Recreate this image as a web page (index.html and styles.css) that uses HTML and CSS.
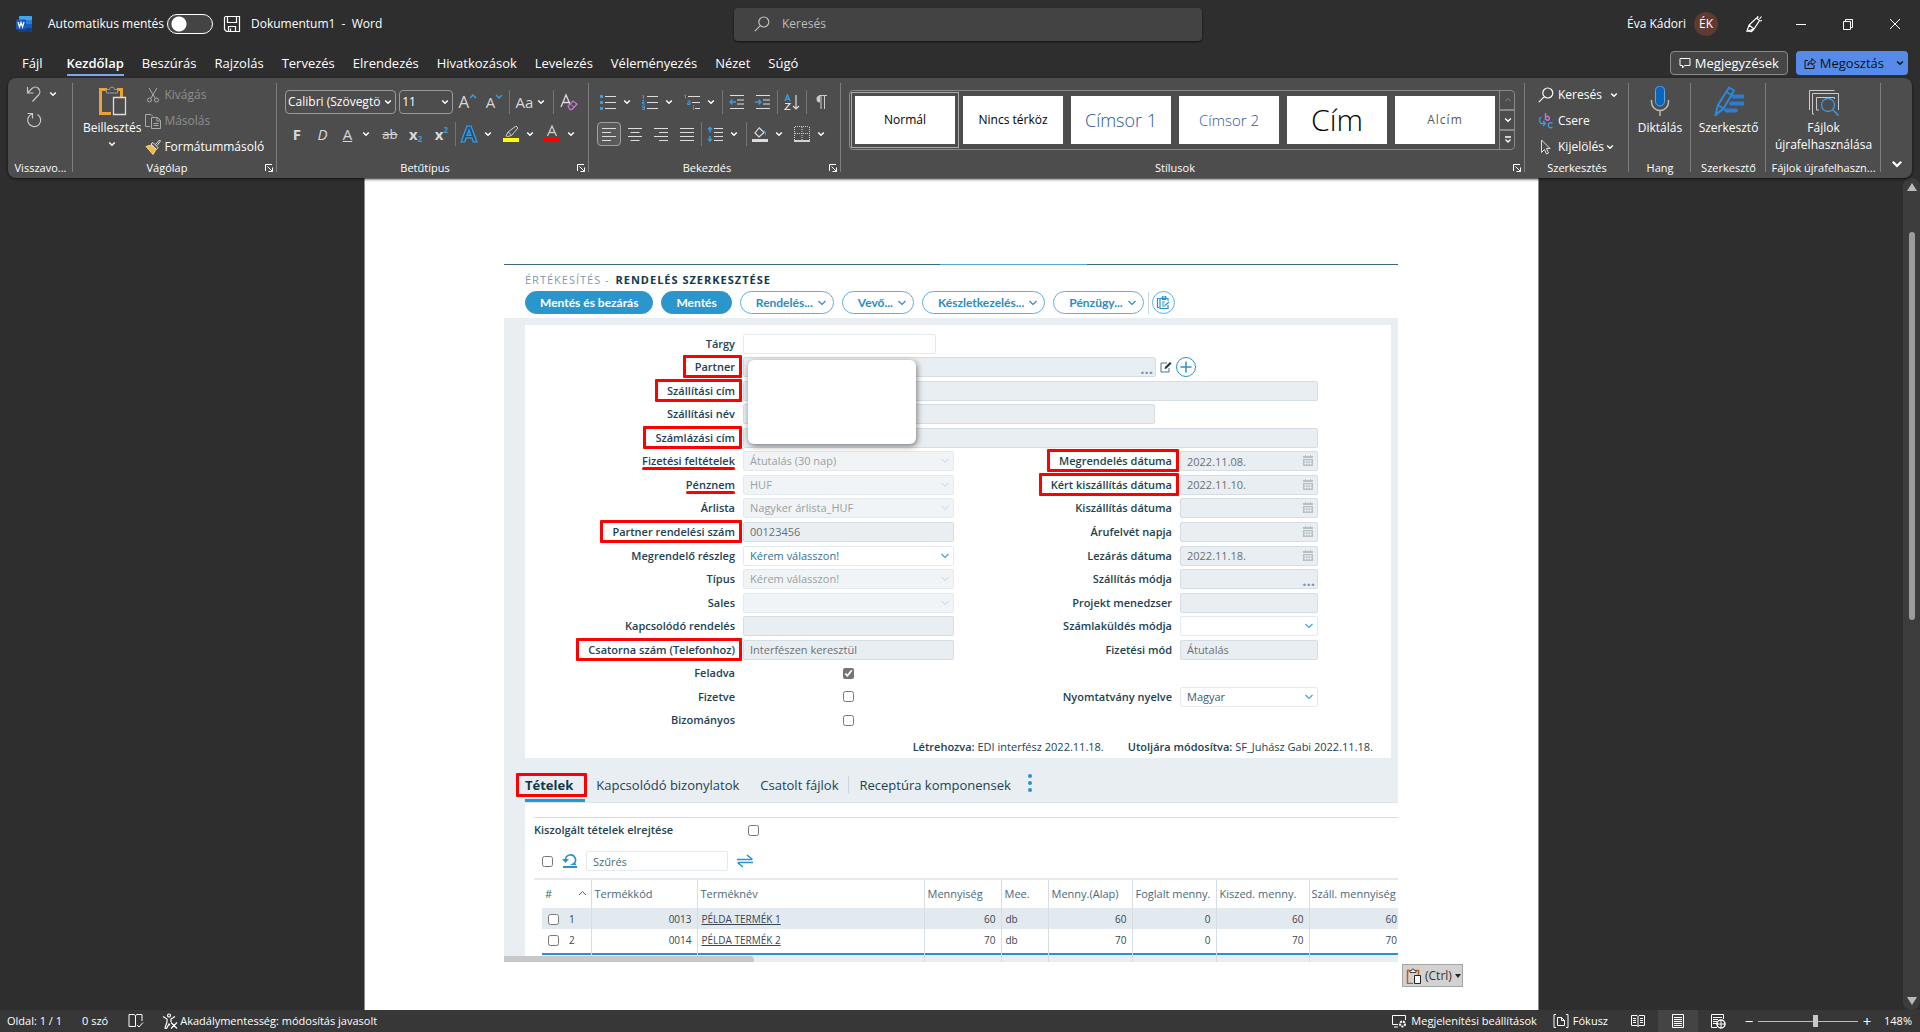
FILE: index.html
```html
<!DOCTYPE html>
<html lang="hu">
<head>
<meta charset="utf-8">
<title>Dokumentum1 - Word</title>
<link rel="stylesheet" href="styles.css">
</head>
<body>
<svg class="sprite" aria-hidden="true">
  <symbol id="chev" viewBox="0 0 8 8"><path d="M1.2 2.5 4 5.3l2.8-2.8" fill="none" stroke="currentColor" stroke-width="1.5"/></symbol>
  <symbol id="launch" viewBox="0 0 8 8"><path d="M.5 7V.5H7M2.5 2.5l5 5M7.500 3.500v4h-4" fill="none" stroke="currentColor"/></symbol>
  <symbol id="lens" viewBox="0 0 16 16"><path d="M6.300 9.700.8 15.200M9.800 11a5 5 0 1 0 0-10 5 5 0 0 0 0 10z" fill="none" stroke="currentColor" stroke-width="1.200"/></symbol>
  <symbol id="cal" viewBox="0 0 12 12"><path d="M1 1h2V0h1v1h4V0h1v1h2v2H1zM1 4h10v7H1z" fill="#b9c0c4"/><path d="M2 6h8M2 8.500h8M3.500 5v5M6 5v5M8.500 5v5" stroke="#e9eef2" stroke-width=".8"/></symbol>
  <symbol id="down" viewBox="0 0 10 8"><path d="M1.500 2 5 5.500 8.500 2" fill="none" stroke="currentColor" stroke-width="1.200"/></symbol>
</svg>

<header class="titlebar">
  <div class="title-left">
    <svg class="logo" viewBox="0 0 16 16"><rect x="3" width="13" height="16" rx="1" fill="#2b7cd3"/><rect x="3" width="13" height="4" rx="1" fill="#41a5ee"/><rect x="3" y="8" width="13" height="4" fill="#185abd"/><path d="M3 12h13v3a1 1 0 0 1-1 1H4a1 1 0 0 1-1-1z" fill="#103f91"/><rect y="3.500" width="10" height="10" rx="1" fill="#185abd"/><path d="m2 6 1.500 5L5 6.500 6.500 11 8 6" fill="none" stroke="#fff" stroke-width="1.200"/></svg>
    <label class="autosave">Automatikus mentés<input type="checkbox" class="switch"></label>
    <button class="plain" aria-label="Mentés"><svg class="i18" viewBox="0 0 18 18"><path d="M1.500 3A1.500 1.500 0 0 1 3 1.500h13.500v15H3.500l-2-2zM4.500 1.500v6h9v-6M5.500 16.500v-5h7v5M7.500 13.500v3" fill="none" stroke="#fff" stroke-width="1.200"/></svg></button>
    <span>Dokumentum1 &nbsp;-&nbsp; Word</span>
  </div>
  <label class="search"><svg class="i16" ><use href="#lens"/></svg><input type="text" placeholder="Keresés" aria-label="Keresés"></label>
  <div class="title-right">
    <span class="user">Éva Kádori</span>
    <span class="avatar">ÉK</span>
    <button class="plain win" aria-label="Rajz"><svg class="i18" viewBox="0 0 18 18"><path d="M2 16 4 10 11.500 3l3 2.500L9 14zM4 10l5 4M2 16l4.500.5L9 14M12.500 3l.5-2M14.500 4l2-2.500M15 6l2-.5" fill="none" stroke="#fff" stroke-width="1.200"/></svg></button>
    <button class="plain win" aria-label="Kis méret"><svg class="i12" viewBox="0 0 12 12"><path d="M1 6.500h10" stroke="#fff"/></svg></button>
    <button class="plain win" aria-label="Előző méret"><svg class="i12" viewBox="0 0 12 12"><path d="M1.500 3.500h7v8h-7zM3.500 3.500v-2h7v8h-2" fill="none" stroke="#fff"/></svg></button>
    <button class="plain win" aria-label="Bezárás"><svg class="i12" viewBox="0 0 12 12"><path d="m1 1 10 10M11 1 1 11" stroke="#fff"/></svg></button>
  </div>
</header>

<nav class="tabs">
  <a href="#" class="file">Fájl</a><a href="#" class="active">Kezdőlap</a><a href="#">Beszúrás</a><a href="#">Rajzolás</a><a href="#">Tervezés</a><a href="#">Elrendezés</a><a href="#">Hivatkozások</a><a href="#">Levelezés</a><a href="#">Véleményezés</a><a href="#">Nézet</a><a href="#">Súgó</a>
  <span class="grow"></span>
  <button class="comments"><svg class="i12" viewBox="0 0 12 12"><path d="M1 1.500h10v7H5.500L3.500 11V8.500H1z" fill="none" stroke="#fff"/></svg>Megjegyzések</button>
  <button class="share"><svg class="i12" viewBox="0 0 12 12"><path d="M4 3.500H1v8h9V8M4 8.500C4 5 6 4 8 4V1.500L11.500 5 8 8V6C6.500 6 5 6.500 4 8.500z" fill="none" stroke="#111"/></svg>Megosztás<svg class="chev"><use href="#chev"/></svg></button>
</nav>

<section class="ribbon">
  <div class="group g-undo">
    <div class="stack">
      <button class="tool split"><svg class="i16" viewBox="0 0 16 16"><path d="M1.500 1v6h6M2 6.500l4-4a4.500 4.500 0 0 1 6.500 6.500l-6 6.500" fill="none" stroke="#c8c8c8" stroke-width="1.200"/></svg><svg class="chev"><use href="#chev"/></svg></button>
      <button class="tool split"><svg class="i16" viewBox="0 0 16 16"><path d="M1.500 1.500h5v5M6 2A6.500 6.500 0 1 0 11.500 2.500" fill="none" stroke="#c8c8c8" stroke-width="1.200"/></svg></button>
    </div>
    <div class="caption">Visszavo...</div>
  </div>
  <div class="group g-clip">
    <div class="clip">
      <button class="big"><svg class="i30" viewBox="0 0 30 30"><path d="M10 3.500H3.500v24H14M20 3.500h4.500V11" fill="none" stroke="#e8a33d" stroke-width="3"/><path d="M9.500 7V3.500h3a2.500 2.500 0 0 1 5 0h3V7z" fill="#4d4d4d" stroke="#9a9a9a"/><path d="M16.500 11.500h12v17h-12z" fill="#4d4d4d" stroke="#ddd" stroke-width="1.300"/></svg>Beillesztés<svg class="chev"><use href="#chev"/></svg></button>
      <div class="mini">
        <button disabled><svg class="i16" viewBox="0 0 16 16"><path d="m4 1 6 10M12 1 6 11M4.500 15a2 2 0 1 0 0-4 2 2 0 0 0 0 4zM11.500 15a2 2 0 1 0 0-4 2 2 0 0 0 0 4z" fill="none" stroke="#aaa"/></svg>Kivágás</button>
        <button disabled><svg class="i16" viewBox="0 0 16 16"><path d="M5 13.500H.5v-12H6l2 2M6.500 4.500h6l3 3v8h-9zM12 4.500v3.500h3.500M8.500 10.500h5M8.500 12.500h5" fill="none" stroke="#aaa"/></svg>Másolás</button>
        <button><svg class="i16" viewBox="0 0 16 16"><path d="M1 7.500 6.500 6 11 10.500 8 15.500z" fill="#f0b64f" stroke="#ffd98a"/><path d="m6 5 2-1.500 5 5-1.500 2z" fill="#555" stroke="#ddd"/><path d="m10.500 5.500 4-4.500 1 1-3.500 4.500" fill="none" stroke="#ddd"/></svg>Formátummásoló</button>
      </div>
    </div>
    <div class="caption tail">Vágólap<svg class="launch"><use href="#launch"/></svg></div>
  </div>
  <div class="group g-font">
    <div class="rows">
      <div class="row wide">
        <label class="combo fontname"><input type="text" value="Calibri (Szövegtörzs)" aria-label="Betűtípus"><svg class="chev"><use href="#chev"/></svg></label>
        <label class="combo fontsize"><input type="text" value="11" aria-label="Betűméret"><svg class="chev"><use href="#chev"/></svg></label>
        <button class="tool big-a">A<svg class="chev blue"><path d="m1 5 3-3 3 3" fill="none" stroke="currentColor" stroke-width="1.500"/></svg></button>
        <button class="tool small-a">A<svg class="chev blue"><path d="m1 2 3 3 3-3" fill="none" stroke="currentColor" stroke-width="1.500"/></svg></button>
        <i class="sep"></i>
        <button class="tool split aa">Aa<svg class="chev"><use href="#chev"/></svg></button>
        <i class="sep"></i>
        <button class="tool"><svg class="i18" viewBox="0 0 18 18"><path d="M1 14 6 2l4 9M3 9.500h6" fill="none" stroke="#ddd" stroke-width="1.300"/><path d="m8 13 5-5 4 3-5 5.500H10z" fill="#4d4d4d" stroke="#c875d6" stroke-width="1.300"/><path d="m10 11 4 3" stroke="#c875d6"/></svg></button>
      </div>
      <div class="row">
        <button class="tool"><b>F</b></button>
        <button class="tool"><em>D</em></button>
        <button class="tool split"><u>A</u><svg class="chev"><use href="#chev"/></svg></button>
        <button class="tool"><s>ab</s></button>
        <button class="tool"><b>x</b><sub>2</sub></button>
        <button class="tool"><b>x</b><sup>2</sup></button>
        <i class="sep"></i>
        <button class="tool split"><svg class="i18" viewBox="0 0 16 16"><path fill-rule="evenodd" d="M1 15 6.200 1h3.600L15 15h-3.200l-1.200-3.500H5.400L4.200 15zM8 4.500 6.300 9.200h3.400z" fill="#1f4e79" stroke="#3a9be0" stroke-width="1.200"/></svg><svg class="chev"><use href="#chev"/></svg></button>
        <button class="tool split"><svg class="i18" viewBox="0 0 18 18"><path d="m4 11 2-4 8-6 2 2-6.500 7.500-4 1zM6 7l3.500 3" fill="none" stroke="#ccc"/><path d="M1 13h16v4H1z" fill="#ff0"/></svg><svg class="chev"><use href="#chev"/></svg></button>
        <button class="tool split"><svg class="i18" viewBox="0 0 18 18"><path d="M4.500 11 9 1l4.500 10M6 7.500h6" fill="none" stroke="#ccc" stroke-width="1.300"/><path d="M1 13h16v4H1z" fill="#f00"/></svg><svg class="chev"><use href="#chev"/></svg></button>
      </div>
    </div>
    <div class="caption tail">Betűtípus<svg class="launch"><use href="#launch"/></svg></div>
  </div>
  <div class="group g-para">
    <div class="rows">
      <div class="row">
        <button class="tool split"><svg class="i16" viewBox="0 0 16 16"><path d="M5 2.500h11M5 8.500h11M5 14.500h11" stroke="#ddd"/><path d="M0 1h3v3H0zM0 7h3v3H0zM0 13h3v3H0z" fill="#3a9be0"/></svg><svg class="chev"><use href="#chev"/></svg></button>
        <button class="tool split"><svg class="i16" viewBox="0 0 16 16"><path d="M5 2.500h11M5 8.500h11M5 14.500h11" stroke="#ddd"/><path d="M.5 1.500h1V5M0 6.500h2v2H.5v1.500H3M0 12h2.500v3.500H0M0 13.700h2.500" fill="none" stroke="#3a9be0"/></svg><svg class="chev"><use href="#chev"/></svg></button>
        <button class="tool split"><svg class="i16" viewBox="0 0 16 16"><path d="M4 2.500h12M8 8.500h8M11 14.500h5" stroke="#ddd"/><path d="M.5 1h1v3.500M3.500 7H6v3.500H3.500V9H6M9.500 12.500V16M9.500 11v1" fill="none" stroke="#3a9be0"/></svg><svg class="chev"><use href="#chev"/></svg></button>
        <i class="sep"></i>
        <button class="tool"><svg class="i16" viewBox="0 0 16 16"><path d="M1 1.500h14M8 6h7M8 10h7M1 14.500h14" stroke="#ddd"/><path d="M7 8H1M3.500 5.500 1 8l2.500 2.500" fill="none" stroke="#3a9be0" stroke-width="1.300"/></svg></button>
        <button class="tool"><svg class="i16" viewBox="0 0 16 16"><path d="M1 1.500h14M8 6h7M8 10h7M1 14.500h14" stroke="#ddd"/><path d="M0 8h6M3.500 5.500 6 8l-2.500 2.500" fill="none" stroke="#3a9be0" stroke-width="1.300"/></svg></button>
        <i class="sep"></i>
        <button class="tool"><svg class="i16" viewBox="0 0 16 16"><path d="M1 7 3.500.8 6 7M2 5h3" fill="none" stroke="#3a9be0" stroke-width="1.400"/><path d="M1 9.500h5L1 15.500h5.500M12 1v14M9 12l3 3 3-3" fill="none" stroke="#ddd" stroke-width="1.200"/></svg></button>
        <i class="sep"></i>
        <button class="tool"><svg class="i16" viewBox="0 0 16 16"><path d="M7 8.500A3.500 3.500 0 0 1 7 1.500z" fill="#ccc"/><path d="M6 1.500h8M8 2v13M11.500 2v13" stroke="#ccc" fill="none"/></svg></button>
      </div>
      <div class="row">
        <button class="tool on"><svg class="i16" viewBox="0 0 16 16"><path d="M1 2.500h14M1 6.500h9M1 10.500h14M1 14.500h9" stroke="#ddd"/></svg></button>
        <button class="tool"><svg class="i16" viewBox="0 0 16 16"><path d="M1 2.500h14M3.500 6.500h9M1 10.500h14M3.500 14.500h9" stroke="#ddd"/></svg></button>
        <button class="tool"><svg class="i16" viewBox="0 0 16 16"><path d="M1 2.500h14M6 6.500h9M1 10.500h14M6 14.500h9" stroke="#ddd"/></svg></button>
        <button class="tool"><svg class="i16" viewBox="0 0 16 16"><path d="M1 2.500h14M1 6.500h14M1 10.500h14M1 14.500h14" stroke="#ddd"/></svg></button>
        <i class="sep"></i>
        <button class="tool split"><svg class="i16" viewBox="0 0 16 16"><path d="M7 2.500h9M7 6.500h9M7 10.500h9M7 14.500h9" stroke="#ddd"/><path d="M3 1.500v5M3 10v5M1 3.500l2-2 2 2M1 13l2 2 2-2" fill="none" stroke="#3a9be0" stroke-width="1.500"/></svg><svg class="chev"><use href="#chev"/></svg></button>
        <i class="sep"></i>
        <button class="tool split"><svg class="i16" viewBox="0 0 16 16"><path d="m7 1.500 5 5-5 4.500-4-4L7 2" fill="none" stroke="#ddd" stroke-width="1.200"/><path d="M12 4q2.500 1 2 6l-1.500-3z" fill="#3a9be0"/><path d="M0 13h16v3H0z" fill="#ddd"/></svg><svg class="chev"><use href="#chev"/></svg></button>
        <button class="tool split"><svg class="i16" viewBox="0 0 16 16"><path d="M.5 1v13M15.500 1v13M8 1v13M1 .5h14M1 7.500h14" stroke="#ccc" stroke-dasharray="1 1"/><path d="M0 15h16" stroke="#fff" stroke-width="1.500"/></svg><svg class="chev"><use href="#chev"/></svg></button>
      </div>
    </div>
    <div class="caption tail">Bekezdés<svg class="launch"><use href="#launch"/></svg></div>
  </div>
  <div class="group g-styles">
    <div class="gallery">
      <button class="tile selected">Normál</button><button class="tile">Nincs térköz</button><button class="tile h1">Címsor 1</button><button class="tile h2">Címsor 2</button><button class="tile big-title">Cím</button><button class="tile subtitle">Alcím</button>
      <div class="gal-nav"><button class="dim" aria-label="Fel"><svg class="chev"><path d="m1.500 5 2.500-2.500L6.500 5" fill="none" stroke="currentColor"/></svg></button><button aria-label="Le"><svg class="chev"><use href="#chev"/></svg></button><button aria-label="Egyebek"><svg class="chev"><path d="M1 1h6M1.500 3.500 4 6l2.500-2.500" fill="none" stroke="currentColor" stroke-width="1.300"/></svg></button></div>
    </div>
    <div class="caption tail">Stílusok<svg class="launch"><use href="#launch"/></svg></div>
  </div>
  <div class="group g-edit">
    <div class="mini">
      <button><svg class="i16"><use href="#lens"/></svg>Keresés<svg class="chev far"><use href="#chev"/></svg></button>
      <button><svg class="i16" viewBox="0 0 16 16"><path d="M7.500 0v7M7.500 4.500a2 2 0 1 1 0 1.500" fill="none" stroke="#c875d6" stroke-width="1.400"/><path d="M14.500 10.500a2.500 2.500 0 1 0 0 3.500M3 4q-3 3 0 6.500h4M5 8l2.500 2.500L5 13" fill="none" stroke="#3a9be0" stroke-width="1.400"/></svg>Csere</button>
      <button><svg class="i16" viewBox="0 0 16 16"><path d="M3.500 1v12.500l3-3 2 4.500 2-1-2-4.500H12z" fill="none" stroke="#ddd"/></svg>Kijelölés<svg class="chev near"><use href="#chev"/></svg></button>
    </div>
    <div class="caption">Szerkesztés</div>
  </div>
  <div class="group g-voice">
    <button class="big"><svg class="i30" viewBox="0 0 30 30"><rect x="10.500" y="0" width="9" height="20" rx="4.500" fill="#0a66bd" stroke="#5aa9ea"/><path d="M6.500 14v2a8.500 8.500 0 0 0 17 0v-2M15 24.500V30" fill="none" stroke="#bbb" stroke-width="1.500"/></svg>Diktálás</button>
    <div class="caption">Hang</div>
  </div>
  <div class="group g-editor">
    <button class="big"><svg class="i30" viewBox="0 0 30 30"><path d="M19 10.500h10M17 17.500h12M12 24.500h10" stroke="#2b7cd3" stroke-width="4" stroke-linecap="round"/><path d="M1.500 29 4 19 15 1.500l5 3L9.500 22.500z" fill="#4d4d4d" stroke="#2b88e0" stroke-width="2"/><path d="m12.500 6 5 3M4 19l5.500 3.500M1.500 29l8-6.500" fill="none" stroke="#2b88e0" stroke-width="2"/></svg>Szerkesztő</button>
    <div class="caption">Szerkesztő</div>
  </div>
  <div class="group g-files">
    <button class="big"><svg class="i30" viewBox="0 0 30 30"><path d="M.5 24V4.500h25M5 28H3.500V7.500h26V24M10 24H7.500V11.500h18V13" fill="none" stroke="#ccc"/><circle cx="19" cy="19" r="6.500" fill="#4d4d4d" stroke="#3a9be0" stroke-width="1.300"/><path d="m24 24 6 6" stroke="#3a9be0" stroke-width="1.500"/></svg>Fájlok<br>újrafelhasználása</button>
    <div class="caption">Fájlok újrafelhaszn...</div>
  </div>
  <button class="collapse" aria-label="Menüszalag összecsukása"><svg class="i12" viewBox="0 0 8 8"><use href="#chev"/></svg></button>
</section>

<main class="workspace">
  <article class="page">
    <div class="erp">
      <div class="strip"><i></i><i></i><i></i></div>
      <h1 class="crumb"><span>ÉRTÉKESÍTÉS -</span> RENDELÉS SZERKESZTÉSE</h1>
      <div class="actions">
        <button class="pill solid">Mentés és bezárás</button>
        <button class="pill solid">Mentés</button>
        <button class="pill">Rendelés...<svg class="dn"><use href="#down"/></svg></button>
        <button class="pill">Vevő...<svg class="dn"><use href="#down"/></svg></button>
        <button class="pill">Készletkezelés...<svg class="dn"><use href="#down"/></svg></button>
        <button class="pill">Pénzügy...<svg class="dn"><use href="#down"/></svg></button>
        <button class="round" aria-label="Jegyzet"><svg class="i14" viewBox="0 0 14 14"><path d="M3.500 2.500h-2v9h1.500M4 2.500h8V5M4 2.500v10h8V9M6 2a2 2 0 0 1 4 0M6 6h3M6 8h2M6 10h3M9 9.500l4-3.500" fill="none" stroke="#2a93cc" stroke-width="1.200"/><path d="M6 1.500h4V4H6z" fill="#2a93cc"/></svg></button>
      </div>
      <div class="body">
        <form class="card">
          <div class="form">
            <label for="f1">Tárgy</label><input id="f1" class="fld edit subject" type="text">
            <label for="f2"><mark>Partner</mark></label><div class="span partner"><div class="wrap"><input id="f2" class="fld" type="text" readonly><span class="dots">...</span></div><svg class="i12" viewBox="0 0 12 12"><path d="M9 7v4H1V2h6" fill="none" stroke="#56707c"/><path d="m4.500 8 .5-2 5-5 1.500 1.500-5 5z" fill="#12384a"/></svg><button type="button" class="plus" aria-label="Új"><svg class="i12" viewBox="0 0 12 12"><path d="M6 .5v11M.5 6h11" stroke="#2a93cc" stroke-width="1.500"/></svg></button></div>
            <label for="f3"><mark>Szállítási cím</mark></label><input id="f3" class="fld span" type="text" readonly>
            <label for="f4">Szállítási név</label><input id="f4" class="fld span name" type="text" readonly>
            <label for="f5"><mark>Számlázási cím</mark></label><input id="f5" class="fld span" type="text" readonly>

            <label for="a1"><mark class="line">Fizetési feltételek</mark></label><div class="wrap"><select id="a1" class="fld off" disabled><option>Átutalás (30 nap)</option></select><svg class="dn"><use href="#down"/></svg></div>
            <label for="b1"><mark>Megrendelés dátuma</mark></label><div class="wrap"><input id="b1" class="fld" type="text" value="2022.11.08." readonly><svg class="i12"><use href="#cal"/></svg></div>

            <label for="a2"><mark class="line">Pénznem</mark></label><div class="wrap"><select id="a2" class="fld off" disabled><option>HUF</option></select><svg class="dn"><use href="#down"/></svg></div>
            <label for="b2"><mark>Kért kiszállítás dátuma</mark></label><div class="wrap"><input id="b2" class="fld" type="text" value="2022.11.10." readonly><svg class="i12"><use href="#cal"/></svg></div>

            <label for="a3">Árlista</label><div class="wrap"><select id="a3" class="fld off" disabled><option>Nagyker árlista_HUF</option></select><svg class="dn"><use href="#down"/></svg></div>
            <label for="b3">Kiszállítás dátuma</label><div class="wrap"><input id="b3" class="fld" type="text" readonly><svg class="i12"><use href="#cal"/></svg></div>

            <label for="a4"><mark>Partner rendelési szám</mark></label><input id="a4" class="fld" type="text" value="00123456" readonly>
            <label for="b4">Árufelvét napja</label><div class="wrap"><input id="b4" class="fld" type="text" readonly><svg class="i12"><use href="#cal"/></svg></div>

            <label for="a5">Megrendelő részleg</label><div class="wrap"><select id="a5" class="fld edit choose"><option>Kérem válasszon!</option></select><svg class="dn blue"><use href="#down"/></svg></div>
            <label for="b5">Lezárás dátuma</label><div class="wrap"><input id="b5" class="fld" type="text" value="2022.11.18." readonly><svg class="i12"><use href="#cal"/></svg></div>

            <label for="a6">Típus</label><div class="wrap"><select id="a6" class="fld off" disabled><option>Kérem válasszon!</option></select><svg class="dn"><use href="#down"/></svg></div>
            <label for="b6">Szállítás módja</label><div class="wrap"><input id="b6" class="fld" type="text" readonly><span class="dots">...</span></div>

            <label for="a7">Sales</label><div class="wrap"><select id="a7" class="fld off" disabled><option></option></select><svg class="dn"><use href="#down"/></svg></div>
            <label for="b7">Projekt menedzser</label><input id="b7" class="fld" type="text" readonly>

            <label for="a8">Kapcsolódó rendelés</label><input id="a8" class="fld" type="text" readonly>
            <label for="b8">Számlaküldés módja</label><div class="wrap"><select id="b8" class="fld edit"><option></option></select><svg class="dn blue"><use href="#down"/></svg></div>

            <label for="a9"><mark>Csatorna szám (Telefonhoz)</mark></label><input id="a9" class="fld" type="text" value="Interfészen keresztül" readonly>
            <label for="b9">Fizetési mód</label><input id="b9" class="fld" type="text" value="Átutalás" readonly>

            <label for="c1">Feladva</label><input id="c1" class="tick" type="checkbox" checked>
            <label for="c2" class="first">Fizetve</label><input id="c2" class="tick" type="checkbox">
            <label for="b10">Nyomtatvány nyelve</label><div class="wrap"><select id="b10" class="fld edit"><option>Magyar</option></select><svg class="dn blue"><use href="#down"/></svg></div>
            <label for="c3" class="first">Bizományos</label><input id="c3" class="tick" type="checkbox">
          </div>
          <div class="cover"></div>
          <p class="audit"><span><b>Létrehozva:</b> EDI interfész 2022.11.18.</span><span><b>Utoljára módosítva:</b> SF_Juhász Gabi 2022.11.18.</span></p>
        </form>

        <nav class="subtabs">
          <a href="#" class="active"><mark>Tételek</mark></a><a href="#">Kapcsolódó bizonylatok</a><a href="#">Csatolt fájlok</a><a href="#" class="ruled">Receptúra komponensek</a>
          <button class="plain more" aria-label="Továbbiak"><i></i><i></i><i></i></button>
        </nav>

        <section class="items">
          <label class="hide">Kiszolgált tételek elrejtése<input class="tick" type="checkbox"></label>
          <div class="filter">
            <input class="tick" type="checkbox" aria-label="Összes kijelölése">
            <svg class="i16" viewBox="0 0 16 16"><path d="M1 14h14" stroke="#2a93cc" stroke-width="2"/><path d="M3.500 7A5 5 0 1 1 11 11.200H14" fill="none" stroke="#2a93cc" stroke-width="1.600"/><path d="M0 6h7L3.500 10z" fill="#2a93cc"/></svg>
            <input class="fld edit" type="text" placeholder="Szűrés" aria-label="Szűrés">
            <svg class="i18" viewBox="0 0 18 18"><path d="M1 7.500h15M11 3l5.500 4.500M17 10.500H2M7 15l-5.500-4.500" fill="none" stroke="#2a93cc" stroke-width="1.600"/></svg>
          </div>
          <table>
            <colgroup><col class="c0"><col class="c1"><col class="c2"><col class="c3"><col class="c4"><col class="c5"><col class="c6"><col class="c6"><col class="c8"><col></colgroup>
            <thead><tr><th></th><th class="idx">#<svg class="dn"><path d="m2 6 3.500-3.500L9 6" fill="none" stroke="currentColor"/></svg></th><th>Termékkód</th><th>Terméknév</th><th>Mennyiség</th><th>Mee.</th><th>Menny.(Alap)</th><th>Foglalt menny.</th><th>Kiszed. menny.</th><th>Száll. mennyiség</th></tr></thead>
            <tbody>
              <tr class="alt"><td></td><td class="sel"><input class="tick" type="checkbox" aria-label="1. tétel">1</td><td class="n">0013</td><td><a href="#">PÉLDA TERMÉK 1</a></td><td class="n">60</td><td>db</td><td class="n">60</td><td class="n">0</td><td class="n">60</td><td class="n">60</td></tr>
              <tr><td></td><td class="sel"><input class="tick" type="checkbox" aria-label="2. tétel">2</td><td class="n">0014</td><td><a href="#">PÉLDA TERMÉK 2</a></td><td class="n">70</td><td>db</td><td class="n">70</td><td class="n">0</td><td class="n">70</td><td class="n">70</td></tr>
              <tr class="end"><td></td><td></td><td></td><td></td><td></td><td></td><td></td><td></td><td></td><td></td></tr>
            </tbody>
          </table>
        </section>
        <div class="hscroll"></div>
      </div>
      <button class="paste"><svg class="i16" viewBox="0 0 16 16"><path d="M4 2.500H1.500v13H7M10 2.500h2.500V7" fill="none" stroke="#b65f1a" stroke-width="1.500"/><path d="M4 4.500v-2h1.500a1.500 1.500 0 0 1 3 0H10v2z" fill="#eee" stroke="#444"/><path d="M8.500 7.500h6v8h-6z" fill="#fff" stroke="#222"/></svg>(Ctrl)<svg class="tri" viewBox="0 0 6 4"><path d="M0 0h6L3 4z" fill="#222"/></svg></button>
    </div>
  </article>
  <div class="vscroll"><svg class="arr" viewBox="0 0 10 8"><path d="m5 0 5 8H0z" fill="#bbb"/></svg><i></i><svg class="arr" viewBox="0 0 10 8"><path d="M0 0h10L5 8z" fill="#bbb"/></svg></div>
</main>

<footer class="status">
  <span>Oldal: 1 / 1</span>
  <span>0 szó</span>
  <svg class="i16" viewBox="0 0 16 16"><path d="M7.500 13.500H1v-12h5l1.500 1L9 1.500h5V8M7.500 2.500v11M9 12l2 2 4-4.500" fill="none" stroke="#fff"/></svg>
  <span class="acc check"><svg class="i16" viewBox="0 0 16 16"><path d="M7 4a1.500 1.500 0 1 0 0-3 1.500 1.500 0 0 0 0 3zM1 3.500 5 6v3l-2 6 1.500.5L7 11l1 1.500M13 3.500 9 6v3M9 9.500l6 6M15 9.500l-6 6" fill="none" stroke="#fff" stroke-width="1.200"/></svg>Akadálymentesség: módosítás javasolt</span>
  <span class="grow"></span>
  <span class="acc"><svg class="i16" viewBox="0 0 16 16"><path d="M7 11.500H1.500v-9h13V7M3 14h4" fill="none" stroke="#fff"/><circle cx="11.500" cy="11" r="2.500" fill="none" stroke="#fff" stroke-width="2" stroke-dasharray="2 1"/></svg>Megjelenítési beállítások</span>
  <span class="acc focus"><svg class="i16" viewBox="0 0 16 16"><path d="M3 1.500H1v13h2M13 1.500h2v13h-2M4.500 4.500h4l3 3v5h-7zM8.500 4.500v3h3" fill="none" stroke="#fff"/></svg>Fókusz</span>
  <div class="views">
    <button class="plain" aria-label="Olvasás"><svg class="i16" viewBox="0 0 16 16"><path d="M1.500 2.500H7l1 1 1-1h5.500v10H9l-1 1-1-1H1.500zM8 3.500v10M3 5.500h3M3 7.500h3M3 9.500h3M10 5.500h3M10 7.500h3M10 9.500h3" fill="none" stroke="#fff"/></svg></button>
    <button class="plain now" aria-label="Nyomtatási elrendezés"><svg class="i16" viewBox="0 0 16 16"><path d="M2.500 1.500h11v13h-11zM4 4.500h8M4 6.500h8M4 8.500h8M4 10.500h8M4 12.500h8" fill="none" stroke="#fff"/></svg></button>
    <button class="plain" aria-label="Webes elrendezés"><svg class="i16" viewBox="0 0 16 16"><path d="M7 14.500H1.500v-13h12V6M3 4.500h9M3 6.500h5M3 8.500h4M3 10.500h4" fill="none" stroke="#fff"/><circle cx="11" cy="11" r="4" fill="#373737" stroke="#fff" stroke-width="1.500"/><path d="M7 11h8M11 7v8" stroke="#fff"/></svg></button>
  </div>
  <div class="zoom"><button class="plain" aria-label="Kicsinyítés">−</button><input type="range" min="0" max="100" value="58" aria-label="Nagyítás"><button class="plain" aria-label="Nagyítás">+</button></div>
  <span class="pct">148%</span>
</footer>
</body>
</html>
```

FILE: styles.css
```css
* { box-sizing: border-box; }
body {
  margin: 0;
  height: 100vh;
  display: flex;
  flex-direction: column;
  overflow: hidden;
  background: #2e2e2e;
  color: #fff;
  font: 12px/16px "Open Sans", "Noto Sans", sans-serif;
}
button, input, select { font: inherit; color: inherit; margin: 0; }
button { background: none; border: 0; padding: 0; white-space: nowrap; }
a { color: inherit; text-decoration: none; }
svg { flex: none; display: block; }
.sprite { position: absolute; width: 0; height: 0; }
.grow { flex: 1; }
.i12 { width: 12px; height: 12px; }
.i14 { width: 14px; height: 14px; }
.i16 { width: 16px; height: 16px; }
.i18 { width: 18px; height: 18px; }
.i30 { width: 30px; height: 30px; }
.chev { width: 8px; height: 8px; }
.blue { color: #3a9be0; }

/* Title bar */
.titlebar {
  display: grid;
  grid-template-columns: 1fr 468px 1fr;
  align-items: center;
  height: 48px;
  padding-left: 16px;
}
.title-left, .title-right { display: flex; align-items: center; }
.title-left { gap: 10px; }
.title-right { justify-content: flex-end; }
.logo { width: 16px; height: 16px; }
.autosave { display: flex; align-items: center; gap: 3px; margin-left: 6px; }
.switch {
  appearance: none;
  width: 46px;
  height: 20px;
  border: 1px solid #fff;
  border-radius: 10px;
  background: radial-gradient(circle at 11px 9px, #fff 7px, #444 8px);
}
.search {
  display: flex;
  align-items: center;
  gap: 12px;
  height: 33px;
  padding: 0 20px;
  background: #434343;
  border-radius: 4px;
  box-shadow: 0 1px 2px #111;
  color: #bdbdbd;
}
.search input { flex: 1; background: none; border: 0; outline: 0; padding: 0; }
.search input::placeholder { color: #bdbdbd; opacity: 1; }
.user { margin-right: 8px; }
.avatar {
  width: 24px;
  height: 24px;
  margin-right: 12px;
  border-radius: 50%;
  background: #5f3a30;
  text-align: center;
  line-height: 24px;
}
.win { width: 47px; height: 32px; display: grid; place-items: center; }
.win:last-child { margin-right: 2px; }

/* Ribbon tabs */
.tabs {
  display: flex;
  align-items: center;
  gap: 18px;
  height: 30px;
  padding: 0 12px 0 22px;
  font-size: 13px;
}
.tabs a { line-height: 22px; padding-top: 1px; border-bottom: 2px solid transparent; }
.tabs .file { margin-right: 6px; }
.tabs a.active { font-weight: 600; border-color: #7aa7f0; }
.comments, .share { display: flex; align-items: center; gap: 4px; height: 24px; padding: 0 8px; border-radius: 4px; }
.comments { border: 1px solid #8a8a8a; background: #464646; }
.share { background: #568bea; color: #111; margin-left: -10px; }
.share .chev { margin-left: 8px; margin-right: -4px; }

/* Ribbon */
.ribbon {
  display: flex;
  height: 100px;
  margin: 0 8px;
  background: #4d4d4d;
  border-radius: 8px;
  position: relative;
  z-index: 1;
  box-shadow: 0 1px 3px #111;
}
.group {
  flex: none;
  display: flex;
  flex-direction: column;
  justify-content: space-between;
  position: relative;
  padding: 8px 8px 0;
}
.group::after { content: ""; position: absolute; right: 0; top: 5px; bottom: 6px; width: 1px; background: #7d7d7d; }
.caption { position: relative; height: 18px; text-align: center; font-size: 11px; white-space: nowrap; }
.caption.tail { padding-right: 16px; }
.launch { position: absolute; width: 8px; height: 8px; right: -4px; top: 4px; }
.g-undo { width: 65px; padding-left: 4px; padding-right: 4px; }
.g-clip { width: 204px; }
.g-font { width: 312px; }
.g-para { width: 252px; }
.g-styles { flex: 1; min-width: 0; }
.g-edit { width: 104px; }
.g-voice { width: 62px; }
.g-editor { width: 75px; }
.g-files { width: 115px; }
.g-voice, .g-editor, .g-files { padding-left: 0; padding-right: 0; }
.stack { display: flex; flex-direction: column; gap: 2px; padding-left: 11px; margin-top: -4px; }
.clip { display: flex; gap: 4px; padding-left: 2px; }
.big { display: flex; flex-direction: column; align-items: center; font-size: 12px; line-height: 17px; }
.big .i30 { margin-bottom: 3px; }
.big .chev { margin-top: 4px; }
.mini { display: flex; flex-direction: column; gap: 10px; padding-top: 1px; font-size: 12px; }
.mini button { display: flex; align-items: center; gap: 4px; height: 16px; }
.clip .mini button { gap: 3px; }
.mini button:disabled { color: #8d8d8d; }
.mini .far { margin-left: 4px; }
.mini .near { margin-left: -2px; }
.g-edit .mini { padding-left: 5px; }
.rows { display: flex; flex-direction: column; gap: 8px; padding-top: 4px; }
.row { display: flex; gap: 2px; align-items: center; }
.row.wide { gap: 3px; }
.tool {
  width: 24px;
  height: 24px;
  display: flex;
  align-items: center;
  justify-content: center;
  color: #d8d8d8;
  font-size: 15px;
}
.tool.split { width: 40px; gap: 6px; padding-left: 2px; justify-content: flex-start; }
.tool.split > u { width: 18px; text-align: center; }
.tool.split > .i16 { margin: 0 1px; }
.tool .chev { color: #fff; }
.tool .chev.blue { color: #3a9be0; align-self: flex-start; margin-top: 3px; }
.tool.aa { width: 37px; gap: 4px; }
.tool.on { border: 1px solid #a0a0a0; border-radius: 4px; background: #5a5a5a; }
.tool s { font-size: 13px; }
.tool sub, .tool sup { font-size: 8px; line-height: 8px; color: #3a9be0; font-weight: 700; }
.tool sub { align-self: flex-end; margin-bottom: 3px; }
.tool sup { align-self: flex-start; margin-top: 4px; }
.tool.big-a { font-size: 17px; }
.sep { width: 1px; height: 24px; background: #757575; }
.combo {
  display: flex;
  align-items: center;
  gap: 3px;
  height: 24px;
  padding: 0 3px 0 2px;
  border: 1px solid #9a9a9a;
  border-radius: 4px;
}
.combo input { flex: 1; width: 0; padding: 0; background: none; border: 0; outline: 0; }
.fontname { width: 112px; }
.fontsize { width: 54px; }
.gallery {
  display: flex;
  gap: 8px;
  height: 60px;
  margin: 4px 2px 0 0;
  padding: 5px 0 5px 5px;
  border: 1px solid #8a8a8a;
  border-radius: 4px;
  overflow: hidden;
}
.tile { flex: none; width: 100px; height: 48px; background: #fff; color: #000; }
.tile.selected { outline: 1px solid #a8a8a8; outline-offset: 3px; }
.tile.h1 { color: #2f5496; font-size: 18px; font-weight: 300; }
.tile.h2 { color: #2f5496; font-size: 15px; font-weight: 300; }
.tile.big-title { font-size: 30px; font-weight: 300; }
.tile.subtitle { color: #5a5a5a; letter-spacing: 1px; }
.gal-nav { flex: none; display: flex; flex-direction: column; width: 16px; margin: -5px 0 -5px -4px; border-left: 1px solid #8a8a8a; }
.gal-nav button { flex: 1; display: grid; place-items: center; }
.gal-nav button + button { border-top: 2px solid #8a8a8a; }
.gal-nav .dim { color: #8a8a8a; }
.collapse { width: 31px; padding: 72px 0 0 10px; }

/* Document area */
.workspace { flex: 1; min-height: 0; display: flex; }
.page {
  flex: 0 1 1175px;
  margin: 0 auto;
  padding: 86px 140px 0 139px;
  background: #fff;
  border: 1px solid #8a8a8a;
  border-width: 0 1px;
  color: #1c4254;
}
.vscroll {
  display: flex;
  flex-direction: column;
  align-items: center;
  width: 17px;
  padding: 5px 0;
  background: #3c3c3c;
  border-radius: 8px;
}
.vscroll i { width: 6px; height: 388px; border-radius: 3px; background: #9c9c9c; margin: 41px 0 auto; }
.arr { width: 10px; height: 8px; }

.erp { position: relative; font-size: 11px; }
.strip { display: flex; height: 1px; }
.strip i { background: #3d6a80; flex: 436; }
.strip i:nth-child(2) { background: #52a8d6; flex: 147; }
.strip i:nth-child(3) { flex: 311; }
.crumb { margin: 0; padding: 7px 0 3px 21px; font-size: 11px; line-height: 16px; font-weight: 700; letter-spacing: 1px; color: #12384a; }
.crumb span { font-weight: 400; color: #8398b0; margin-right: 2px; }
.actions { display: flex; gap: 8px; padding: 0 0 4px 21px; }
.pill {
  display: flex;
  align-items: center;
  gap: 4px;
  height: 23px;
  padding: 0 6px 0 15px;
  border: 1px solid #62b0da;
  border-radius: 12px;
  color: #2a8cc4;
  font-family: Lato, "Open Sans", sans-serif;
  font-size: 12px;
  font-weight: 700;
}
.pill.solid { padding: 0 14px; background: #2a96cc; border-color: #2a96cc; color: #fff; }
.dn { width: 10px; height: 8px; }
.round { position: relative; width: 23px; height: 23px; border: 1px solid #62b0da; border-radius: 50%; display: grid; place-items: center; }
.round::before { content: ""; position: absolute; left: -5px; top: 0; width: 1px; height: 22px; background: #ccd6dd; }
.body { position: relative; background: #e9eef2; padding: 7px 0 0 21px; height: 644px; overflow: hidden; }
.card { position: relative; background: #fff; margin-right: 7px; padding-top: 7px; height: 433px; }
.form {
  display: grid;
  grid-template-columns: 210px 211px 210px 138px;
  grid-template-rows: repeat(17, 1fr);
  column-gap: 8px;
  height: 400px;
  align-items: center;
}
.form label { text-align: right; font-weight: 600; white-space: nowrap; }
.first { grid-column: 1; }
.span, .subject { grid-column: 2 / 5; }
.fld {
  display: block;
  width: 100%;
  height: 20px;
  padding: 0 6px;
  border: 1px solid #d5dee5;
  border-radius: 2px;
  background: #e9eef2;
  color: #6b7073;
  outline: 0;
  appearance: none;
}
.fld.subject { width: 193px; }
.fld.name { width: 412px; }
.fld.off { background: #f0f4f6; border-color: #e3e9ed; color: #9b9fa1; opacity: 1; }
.fld.edit { background: #fff; border-color: #e4ebf0; color: #3d5a68; }
.fld.choose { color: #2f7398; }
.wrap { position: relative; color: #d9dfe3; }
.wrap > svg { position: absolute; right: 4px; top: 4px; }
.wrap > svg.dn { top: 6px; }
.wrap > svg.blue { color: #46a3d4; }
.dots { position: absolute; right: 3px; bottom: 2px; color: #7d93b5; font-weight: 700; font-size: 15px; line-height: 14px; }
.partner { display: flex; align-items: center; gap: 4px; }
.partner .wrap { width: 413px; }
.plus { width: 20px; height: 20px; border: 1px solid #2a93cc; border-radius: 50%; display: grid; place-items: center; }
.tick { width: 11px; height: 11px; justify-self: center; accent-color: #757575; }
mark { position: relative; background: none; color: inherit; }
mark::after { content: ""; position: absolute; inset: -4px -7px -4px -12px; border: 3px solid #f00; border-radius: 1px; z-index: 1; }
mark.line::after { inset: auto 0 -2px 0; border-width: 0 0 3px; border-radius: 2px; }
.cover {
  position: absolute;
  left: 223px;
  top: 35px;
  width: 168px;
  height: 84px;
  background: #fff;
  border-radius: 6px;
  box-shadow: 1px 2px 6px rgba(0, 0, 0, .5);
  z-index: 2;
}
.audit { display: flex; justify-content: flex-end; gap: 24px; margin: 7px 18px 0 0; }
.audit b { font-weight: 600; }

.subtabs { display: flex; align-items: stretch; height: 44px; font-size: 13px; line-height: 20px; gap: 21px; }
.subtabs a { padding-top: 17px; }
.subtabs .active { font-weight: 700; color: #12384a; border-bottom: 3px solid #2a96cc; padding-right: 12px; margin-right: -10px; }
.subtabs .active mark::after { inset: -3px -14px -3px -9px; }
.subtabs .ruled { position: relative; }
.subtabs .ruled::before { content: ""; position: absolute; left: -11px; top: 18px; height: 17px; width: 1px; background: #ccd6dd; }
.more { display: flex; flex-direction: column; gap: 3px; padding-top: 16px; margin-left: -4px; }
.more i { width: 4px; height: 4px; border-radius: 50%; background: #2a93cc; }

.items { background: #fff; padding: 14px 0 0 9px; border-top: 1px solid #dde5ea; height: 170px; overflow: hidden; }
.hide { display: flex; align-items: center; gap: 75px; padding-top: 4px; border-top: 1px solid #d5dee5; font-weight: 600; }
.filter { display: flex; align-items: center; gap: 8px; padding: 13px 0 7px 8px; }
.filter .i16 { margin-left: 1px; }
.filter .fld { width: 142px; }
.filter .fld::placeholder { color: #4a6b7a; opacity: 1; }
table { width: 100%; table-layout: fixed; border-collapse: collapse; border-top: 2px solid #e4eaee; }
.c0 { width: 8px; }
.c1 { width: 49px; }
.c2 { width: 106px; }
.c3 { width: 227px; }
.c4 { width: 77px; }
.c5 { width: 47px; }
.c6 { width: 84px; }
.c8 { width: 93px; }
th, td { padding: 0 4px; text-align: left; white-space: nowrap; border-left: 1px solid #d5dee5; }
th { height: 29px; padding: 0 0 0 3px; font-weight: 400; color: #47697a; }
th:last-child { padding-left: 2px; }
td { height: 21px; color: #3a4750; font-size: 10px; }
th:nth-child(-n+2), td:nth-child(-n+2) { border-left: 0; }
td:nth-child(n+3) { padding-right: 5px; }
td:last-child { padding-right: 1px; }
.n { text-align: right; }
.alt td:nth-child(n+2) { background: #e2e9ef; }
td a { text-decoration: underline; }
.idx .dn { float: right; margin: 3px 4px 0 0; }
.sel .tick { margin: 0 10px 0 2px; vertical-align: -2px; }
.end td { height: 12px; background: linear-gradient(#fff 3px, #2a93cc 3px, #2a93cc 5px, #e9eef2 5px); }
.end td:first-child { background: none; }
.hscroll { position: absolute; left: 0; bottom: 0; width: 250px; height: 6px; background: #c8c8c8; border-radius: 0 4px 0 0; }
.paste {
  position: absolute;
  left: 100%;
  top: 100%;
  margin: 2px 0 0 4px;
  display: flex;
  align-items: center;
  gap: 3px;
  width: 61px;
  height: 23px;
  padding: 0 3px;
  background: #d2d2d2;
  border: 1px solid #a5a5a5;
  color: #333;
  font-size: 12px;
}
.tri { width: 6px; height: 4px; }

/* Status bar */
.status { display: flex; align-items: center; height: 22px; padding: 0 8px 0 7px; background: #373737; font-size: 11px; gap: 20px; white-space: nowrap; }
.acc { display: flex; align-items: center; gap: 4px; }
.status .check { gap: 2px; margin-left: -2px; }
.status .focus { margin: 0 -10px 0 -4px; }
.views { display: flex; align-self: stretch; }
.views .plain { width: 40px; display: grid; place-items: center; }
.views .now { background: #444; }
.zoom { display: flex; align-items: center; gap: 4px; margin-left: -14px; }
.zoom .plain { width: 10px; font-size: 15px; }
.zoom input {
  appearance: none;
  width: 100px;
  height: 12px;
  background: linear-gradient(#bbb, #bbb) center / 100% 1px no-repeat;
}
.zoom input::-webkit-slider-thumb { appearance: none; width: 5px; height: 12px; background: #c8c8c8; }
.pct { margin-left: -8px; }
```
